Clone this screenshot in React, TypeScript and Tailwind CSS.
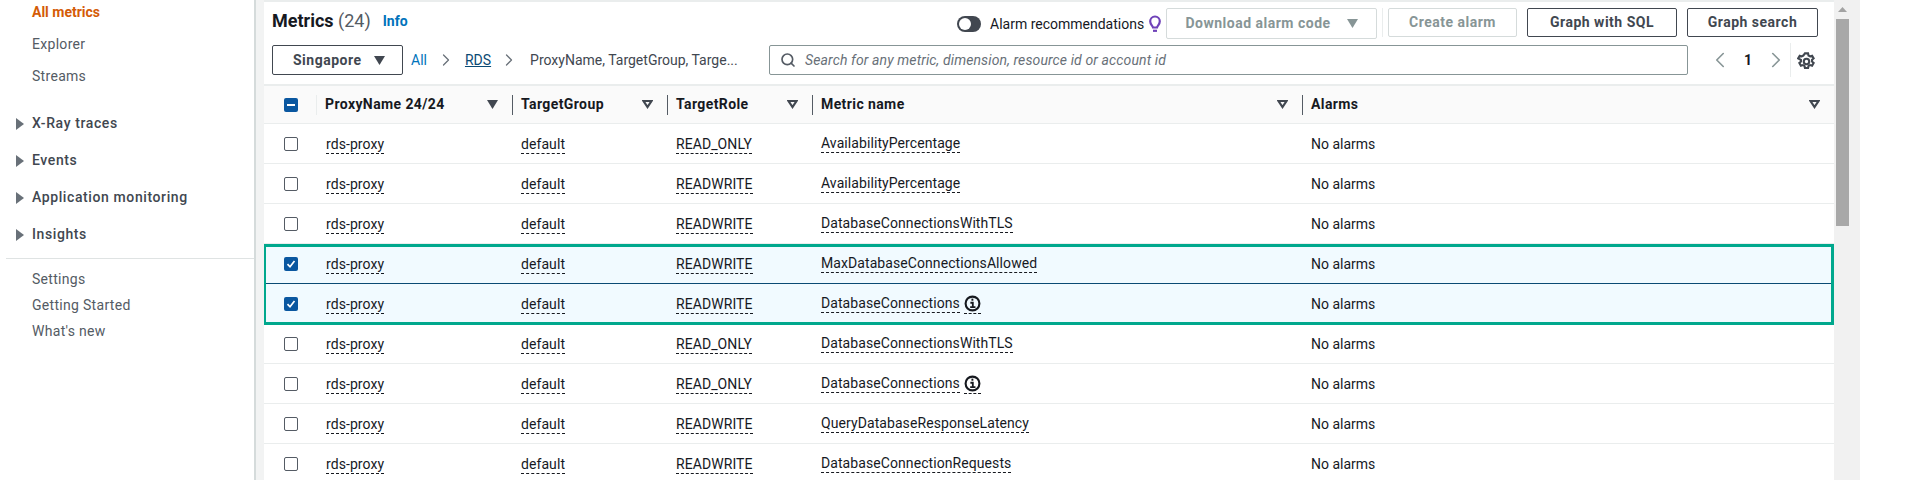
import { ChevronLeft, ChevronRight, Search } from 'lucide-react';

const FONT = "font-['Roboto','Liberation_Sans',sans-serif]";
const GRID = 'grid grid-cols-[53px_195px_155px_145px_490px_532px]';

const ROWS = [
  { role: 'READ_ONLY', metric: 'AvailabilityPercentage' },
  { role: 'READWRITE', metric: 'AvailabilityPercentage' },
  { role: 'READWRITE', metric: 'DatabaseConnectionsWithTLS' },
  { role: 'READWRITE', metric: 'MaxDatabaseConnectionsAllowed', checked: true },
  { role: 'READWRITE', metric: 'DatabaseConnections', info: true, checked: true },
  { role: 'READ_ONLY', metric: 'DatabaseConnectionsWithTLS' },
  { role: 'READ_ONLY', metric: 'DatabaseConnections', info: true },
  { role: 'READWRITE', metric: 'QueryDatabaseResponseLatency' },
  { role: 'READWRITE', metric: 'DatabaseConnectionRequests' },
];

const HEADERS = [
  { label: 'ProxyName 24/24', filled: true },
  { label: 'TargetGroup' },
  { label: 'TargetRole' },
  { label: 'Metric name' },
  { label: 'Alarms' },
];

function Caret({ filled, color = '#414750' }: { filled?: boolean; color?: string }) {
  return (
    <svg width="11" height="9" viewBox="0 0 11 9" className="shrink-0">
      {filled ? (
        <path d="M0 0h11L5.500 9z" fill={color} />
      ) : (
        <path d="M1.500 1h8L5.500 7z" fill="none" stroke={color} strokeWidth="2.200" />
      )}
    </svg>
  );
}

function Checkbox({ checked }: { checked?: boolean }) {
  if (checked) {
    return (
      <span className="flex h-[14px] w-[14px] items-center justify-center rounded-[2px] bg-[#0a57a0]">
        <svg width="10" height="10" viewBox="0 0 10 10" fill="none" stroke="#fff" strokeWidth="1.700">
          <path d="M1.500 5.200 4 7.800 8.500 2" />
        </svg>
      </span>
    );
  }
  return <span className="h-[14px] w-[14px] rounded-[2px] border border-[#545b64] bg-white" />;
}

function Dashed({ children }: { children: React.ReactNode }) {
  return (
    <span className="border-b border-dashed border-[#16191f] pb-[1px] leading-[15px] tracking-[0.08px]">{children}</span>
  );
}

function InfoIcon() {
  return (
    <span className="ml-[4px] inline-flex border-b border-dashed border-[#16191f] pb-[1px]">
      <svg width="17" height="17" viewBox="0 0 16 16" fill="none" stroke="#16191f">
        <circle cx="8" cy="8" r="6.500" strokeWidth="2" />
        <path d="M6 7.300H8.300V11.500M5.800 11.500h5" strokeWidth="1.700" />
        <path d="M7 4.400h1.800" strokeWidth="2" />
      </svg>
    </span>
  );
}

function Bulb() {
  return (
    <svg width="12" height="18" viewBox="0 0 12 18" fill="none" stroke="#6f42b8" strokeWidth="2.200">
      <path d="M4 12.500C3.600 10.800 1.200 9.600 1.200 6.300a4.800 4.800 0 0 1 9.600 0c0 3.300-2.400 4.500-2.800 6.200z" />
      <path d="M4 15.800h4" />
    </svg>
  );
}

function Gear() {
  return (
    <svg width="19" height="19" viewBox="0 0 16 16" fill="none" stroke="#414750" strokeWidth="1.800">
      <circle cx="8" cy="8" r="2.300" />
      <path d="M6.700 1.200h2.600l.4 1.800 1.300.7 1.700-.6 1.300 2.300-1.300 1.200v1.500l1.300 1.200-1.300 2.300-1.700-.6-1.300.7-.4 1.800H6.700l-.4-1.800-1.300-.7-1.700.6-1.300-2.300 1.300-1.200V6.600L1 5.400l1.300-2.300 1.700.6 1.300-.7z" />
    </svg>
  );
}

function Button({ children, disabled, className }: { children: React.ReactNode; disabled?: boolean; className: string }) {
  return (
    <button
      className={`flex h-[29px] items-center justify-center rounded-[2px] border bg-white text-[14px] font-bold tracking-[0.5px] ${
        disabled ? 'border-[#d5dbdb] text-[#879596]' : 'border-[#414750] text-[#414750]'
      } ${className}`}
    >
      {children}
    </button>
  );
}

function Sidebar() {
  return (
    <aside className="flex h-full w-[256px] shrink-0 flex-col border-r-2 border-[#d5dbdb] bg-white text-[14px] tracking-[0.3px] text-[#545b64]">
      <div className="mt-[3px] flex flex-col gap-[13px] pl-[32px] leading-[19px]">
        <a className="font-bold tracking-normal text-[#d45b07]">All metrics</a>
        <a>Explorer</a>
        <a>Streams</a>
      </div>
      <div className="mt-[28px] flex flex-col gap-[18px] pl-[16px] font-medium leading-[19px] tracking-[0.6px] text-[#414750]">
        {['X-Ray traces', 'Events', 'Application monitoring', 'Insights'].map((item) => (
          <div key={item} className="flex items-center gap-[8px]">
            <svg width="8" height="12" viewBox="0 0 8 12" className="shrink-0">
              <path d="M0 0l8 6-8 6z" fill="#687078" />
            </svg>
            {item}
          </div>
        ))}
      </div>
      <div className="ml-[6px] mt-[14px] h-px bg-[#dfe3e3]" />
      <div className="mt-[11px] flex flex-col gap-[7px] pl-[32px] leading-[19px]">
        <a>Settings</a>
        <a>Getting Started</a>
        <a>What's new</a>
      </div>
    </aside>
  );
}

function Toolbar() {
  return (
    <div className="h-[82px] shrink-0 bg-white pl-[8px] pr-[16px]">
      <div className="flex h-[43px] items-start">
        <h1 className="mt-[7px] text-[18px] font-bold leading-[24px] text-[#16191f]">
          Metrics <span className="font-normal text-[#545b64]">(24)</span>
        </h1>
        <a className="ml-[12px] mt-[10px] text-[14px] font-bold leading-[19px] text-[#0073bb]">Info</a>
        <div className="ml-auto mt-[6px] flex items-start">
          <div className="mt-[8px] h-[16px] w-[24px] rounded-full bg-[#414750] p-[2px]">
            <div className="h-[12px] w-[12px] rounded-full bg-white" />
          </div>
          <span className="ml-[9px] mt-[7px] w-[156px] text-[14px] leading-[19px] text-[#16191f]">Alarm recommendations</span>
          <span className="ml-[3px] mt-[7px] w-[17px]">
            <Bulb />
          </span>
          <Button disabled className="h-[31px] w-[211px] gap-[16px] text-[#879596]">
            Download alarm code <Caret filled color="#879596" />
          </Button>
          <span className="ml-[5px] mr-[5px] h-[29px] w-px bg-[#eaeded]" />
          <Button disabled className="w-[129px]">
            Create alarm
          </Button>
          <Button className="ml-[10px] w-[150px]">Graph with SQL</Button>
          <Button className="ml-[10px] w-[131px]">Graph search</Button>
        </div>
      </div>
      <div className="flex h-[30px] items-center">
        <button className="flex h-[30px] w-[131px] items-center rounded-[2px] border border-[#414750] bg-white pl-[20px] text-[14px] font-bold tracking-[0.5px] text-[#414750]">
          Singapore
          <span className="ml-[12px]">
            <Caret filled />
          </span>
        </button>
        <a className="ml-[8px] text-[14px] text-[#0073bb]">All</a>
        <ChevronRight size={20} strokeWidth={1.500} className="ml-[9px] text-[#687078]" />
        <a className="ml-[9px] text-[14px] text-[#0a4a74] underline">RDS</a>
        <ChevronRight size={20} strokeWidth={1.500} className="ml-[8px] text-[#687078]" />
        <span className="ml-[11px] w-[217px] text-[14px] text-[#414750]">ProxyName, TargetGroup, Targe...</span>
        <div className="ml-[22px] flex h-[30px] w-[919px] items-center rounded-[2px] border border-[#879596] bg-white pl-[10px]">
          <Search size={16} strokeWidth={2.500} className="text-[#545b64]" />
          <span className="ml-[9px] text-[14px] italic tracking-[0.12px] text-[#687078]">
            Search for any metric, dimension, resource id or account id
          </span>
        </div>
        <ChevronLeft size={26} strokeWidth={1.500} className="ml-[19px] text-[#879596]" />
        <span className="ml-[8px] w-[14px] text-center text-[14px] font-bold text-[#16191f]">1</span>
        <ChevronRight size={26} strokeWidth={1.500} className="ml-[8px] text-[#879596]" />
        <span className="ml-[1px] h-[34px] w-px bg-[#eaeded]" />
        <span className="ml-[6px] mt-[3px]">
          <Gear />
        </span>
      </div>
    </div>
  );
}

function MetricsTable() {
  return (
    <div className={`relative flex-1 text-[14px] text-[#16191f] ${FONT}`}>
      <div className={`${GRID} h-[38px] items-center border-b border-[#eaeded] bg-[#fafafa] font-bold tracking-[0.4px] text-[#16191f]`}>
        <div className="flex h-[20px] items-center border-r border-[#eaeded] pl-[20px]">
          <span className="flex h-[14px] w-[14px] items-center justify-center rounded-[2px] bg-[#0a57a0]">
            <span className="h-[2px] w-[8px] bg-white" />
          </span>
        </div>
        {HEADERS.map((header, i) => (
          <div
            key={header.label}
            className={`flex h-[20px] items-center pl-[8px] pr-[14px] ${i > 0 ? 'border-l border-[#545b64]' : ''}`}
          >
            <span>{header.label}</span>
            <span className="ml-auto">
              <Caret filled={header.filled} />
            </span>
          </div>
        ))}
      </div>
      {ROWS.map((row, i) => (
        <div
          key={i}
          className={`${GRID} h-[40px] items-center border-b ${
            i === 3 ? 'border-[#0a4a74]' : 'border-[#eaeded]'
          } ${row.checked ? 'bg-[#f1faff]' : 'bg-white'}`}
        >
          <div className="flex pl-[20px]">
            <Checkbox checked={row.checked} />
          </div>
          <div className="pl-[9px] pt-[2px]">
            <Dashed>rds-proxy</Dashed>
          </div>
          <div className="pl-[9px] pt-[2px]">
            <Dashed>default</Dashed>
          </div>
          <div className="pl-[9px] pt-[2px]">
            <Dashed>{row.role}</Dashed>
          </div>
          <div className="flex items-center pl-[9px] pt-[2px]">
            <Dashed>{row.metric}</Dashed>
            {row.info && <InfoIcon />}
          </div>
          <div className="pl-[9px] pt-[2px]">No alarms</div>
        </div>
      ))}
      {/* Green annotation box drawn over the two selected rows */}
      <div className="pointer-events-none absolute left-[-1px] right-0 top-[158px] h-[81px] border-[3px] border-[#00a88d]" />
    </div>
  );
}

function Scrollbar() {
  return (
    <div className="flex w-[26px] shrink-0 flex-col bg-[#f1f1f1] pl-[2px] pr-[11px]">
      <div className="flex h-[19px] items-center justify-center">
        <svg width="9" height="5" viewBox="0 0 9 5">
          <path d="M4.500 0 9 5H0z" fill="#a3a3a3" />
        </svg>
      </div>
      <div className="h-[207px] bg-[#a8a8a8]" />
    </div>
  );
}

export default function App() {
  return (
    <div className={`flex h-[480px] w-[1920px] overflow-hidden bg-white ${FONT}`}>
      <Sidebar />
      <div className="w-[8px] shrink-0 bg-[#f2f3f3]" />
      <div className="flex w-[1570px] shrink-0 flex-col overflow-hidden bg-[#eaeded] pt-[2px]">
        <Toolbar />
        <div className="h-[2px] shrink-0" />
        <MetricsTable />
      </div>
      <Scrollbar />
    </div>
  );
}
